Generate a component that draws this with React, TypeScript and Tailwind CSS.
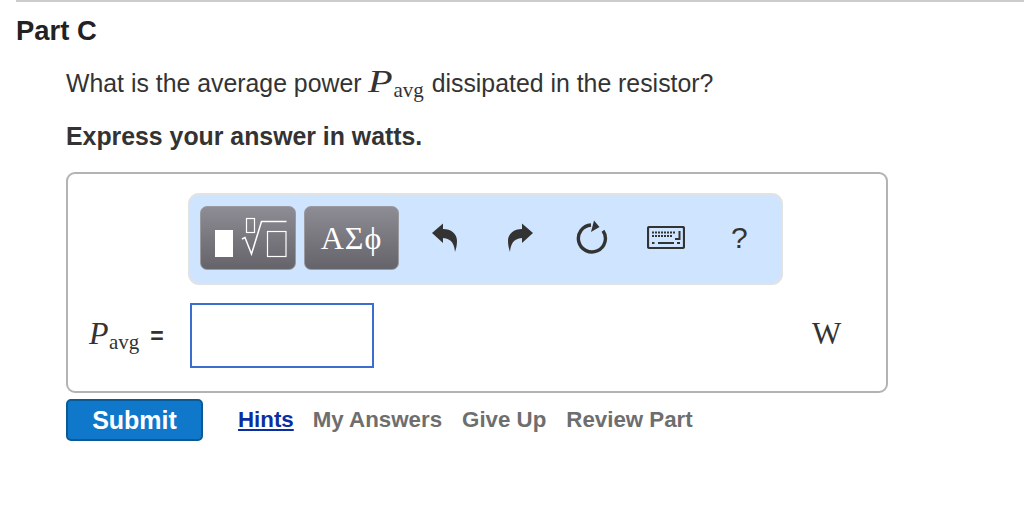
const sans = "font-['Liberation_Sans',Arial,sans-serif]";

function Pavg({ narrow }: { narrow?: boolean }) {
  return (
    <span className="inline-flex items-baseline font-['Liberation_Serif',serif] text-[#333]">
      <span className={`inline-block ${narrow ? "w-[20px] scale-x-[1.03]" : "w-[25px] scale-x-[1.3]"} origin-left italic text-[31px] leading-none`}>P</span>
      <span className="text-[21px] leading-none relative top-[5px]">avg</span>
    </span>
  );
}

function TemplateButton() {
  return (
    <button className="w-[96px] h-[64px] rounded-[7px] border border-[#9a9aa0] bg-gradient-to-b from-[#8e8c94] to-[#64646a] flex items-center justify-center">
      <svg width="84" height="50" viewBox="0 0 84 50" fill="none" stroke="#fff" strokeWidth="1.2">
        <rect x="9" y="17" width="18" height="27" fill="#fff" stroke="none" />
        <rect x="40.5" y="5.5" width="8" height="14" />
        <rect x="61.5" y="18.5" width="18.5" height="25" />
        <path d="M36 26 L39 24.5 L45.5 41 L55.5 8.5 L80.5 8.5" strokeWidth="1.5" />
      </svg>
    </button>
  );
}

function Undo({ flip }: { flip?: boolean }) {
  return (
    <svg width="28" height="32" viewBox="0 0 28 32" className={flip ? "-scale-x-100" : ""}>
      <path d="M1 11 L12 1.5 L12 7 C20 7 26 11.5 26 19 C26 23 25 27 24 30 C23.5 23 21 16.5 12 16 L12 21 Z" fill="#333" />
    </svg>
  );
}

function Reset() {
  return (
    <svg width="32" height="36" viewBox="0 0 32 36" fill="none">
      <path d="M15 5 A13.5 13.5 0 1 0 27 10.8" stroke="#333" strokeWidth="3.4" />
      <path d="M18 0.5 L23.5 7 L15 12 Z" fill="#333" />
    </svg>
  );
}

function Keyboard() {
  return (
    <svg width="38" height="24" viewBox="0 0 38 24" fill="none">
      <rect x="1" y="1" width="36" height="21" rx="1.5" stroke="#333" strokeWidth="2.2" />
      <path d="M5 6.5 H29 M5 10 H26" stroke="#333" strokeWidth="2" strokeDasharray="2 1" />
      <path d="M32.5 5 V13 H28" stroke="#333" strokeWidth="2" />
      <path d="M5 17 H7.5 M11 17 H27 M30 17 H33" stroke="#333" strokeWidth="2" />
    </svg>
  );
}

export default function App() {
  return (
    <div className={`${sans} w-[1024px] h-[506px] bg-white overflow-hidden pl-4 text-[#333]`}>
      <div className="border-t-2 border-[#ccc] pt-[14px]">
        <h2 className="text-[27.4px] leading-[30px] font-bold text-[#222]">Part C</h2>
      </div>
      <div className="pl-[50px]">
        <p className="mt-[20px] h-[36px] text-[24.85px] leading-[36px] flex items-baseline">
          <span>What is the average power&nbsp;</span>
          <Pavg />
          <span className="ml-[1px]">&nbsp;dissipated in the resistor?</span>
        </p>
        <p className="mt-[17px] text-[24.85px] leading-[36px] font-bold">Express your answer in watts.</p>
        <div className="mt-[17px] w-[822px] h-[221px] rounded-[9px] border-2 border-[#b3b3b3] pt-[19px]">
          <div className="ml-[120px] w-[595px] h-[92px] rounded-[11px] bg-[#cfe4ff] border-2 border-[#e0e2e4] flex items-center pl-[10px] pb-[2px]">
            <TemplateButton />
            <button className="ml-[8px] w-[95px] h-[64px] rounded-[7px] border border-[#9a9aa0] bg-gradient-to-b from-[#8e8c94] to-[#64646a] text-white font-['Liberation_Serif',serif] text-[32px] tracking-[1px]">
              ΑΣϕ
            </button>
            <div className="ml-[32px]"><Undo /></div>
            <div className="ml-[47px]"><Undo flip /></div>
            <div className="ml-[42px]"><Reset /></div>
            <div className="ml-[39px]"><Keyboard /></div>
            <span className="ml-[46px] text-[30px] leading-none">?</span>
          </div>
          <div className="mt-[18px] flex items-center pl-[21px]">
            <span className="w-[80px] flex items-baseline">
              <Pavg narrow />
              <span className="ml-[11px] text-[23px] font-bold">=</span>
            </span>
            <input className="ml-[21px] w-[184px] h-[65px] border-2 border-[#3a6fcf] bg-white" />
            <span className="ml-[438px] -mt-[4px] font-['Liberation_Serif',serif] text-[31px] leading-none">W</span>
          </div>
        </div>
        <div className="mt-[6px] flex items-center">
          <button className="w-[137px] h-[42px] rounded-[5px] bg-[#0f78ca] border-2 border-[#0b5a96] text-white font-bold text-[25px] leading-none">Submit</button>
          <a className="ml-[35px] text-[22.3px] font-bold text-[#0b2fa0] underline">Hints</a>
          <a className="ml-[19px] text-[22.3px] font-bold text-[#6e6e6e]">My Answers</a>
          <a className="ml-[20px] text-[22.3px] font-bold text-[#6e6e6e]">Give Up</a>
          <a className="ml-[20px] text-[22.3px] font-bold text-[#6e6e6e]">Review Part</a>
        </div>
      </div>
    </div>
  );
}
